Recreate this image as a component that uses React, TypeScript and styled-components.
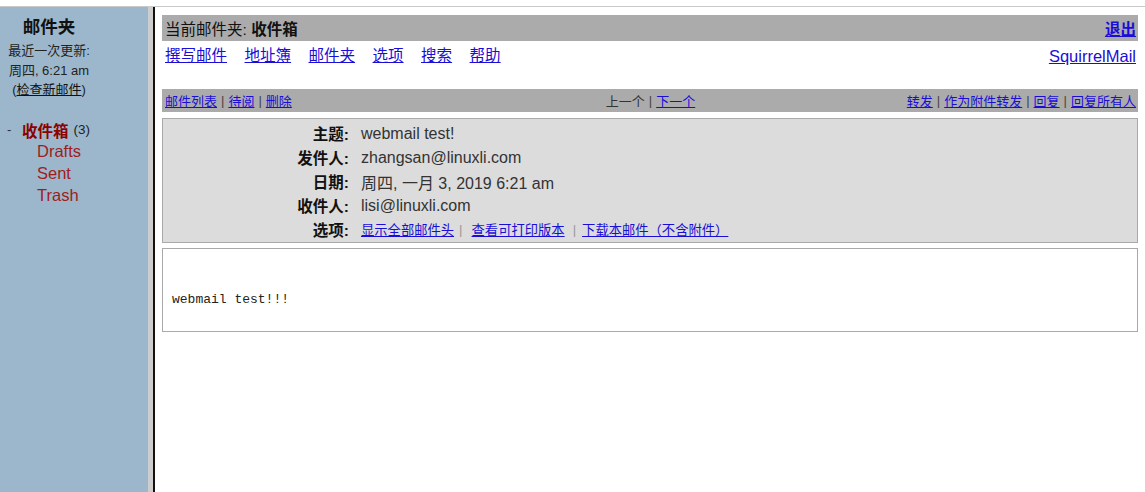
import { createGlobalStyle, styled } from "styled-components";

const GlobalStyle = createGlobalStyle`
  html, body {
    margin: 0;
    padding: 0;
    background: #fff;
  }
  body {
    font-family: "Liberation Sans", "Noto Sans CJK SC", sans-serif;
    color: #222;
  }
`

const Page = styled.div`
  display: flex;
  flex-direction: column;
  height: 100vh;
`

const TopStrip = styled.div`
  height: 6px;
  border-bottom: 1px solid #c9c9c9;
  background: #fff;
  flex: none;
`

const Frames = styled.div`
  flex: 1;
  display: flex;
  min-height: 0;
`

const LeftPane = styled.aside`
  width: 141px;
  flex: none;
  background: #9cb7cb;
  padding: 7px 0 0 7px;
`

const Splitter = styled.div`
  width: 5px;
  flex: none;
  background: #cdcdcd;
  border-right: 2px solid #111;
`

const FolderHead = styled.div`
  width: 84px;
  text-align: center;
  font-size: 13px;
  line-height: 19.5px;
  color: #222;
`

const FolderTitle = styled.div`
  font-size: 17.5px;
  font-weight: bold;
  line-height: 26px;
  color: #111;
  margin-bottom: 1px;
`

const RefreshLink = styled.a`
  color: #111;
  text-decoration: underline;
`

const FolderList = styled.ul`
  list-style: none;
  margin: 19px 0 0;
  padding: 0;
  font-size: 16.5px;
`

const FolderItem = styled.li<{ $indent?: boolean }>`
  display: flex;
  align-items: center;
  height: 22px;
  padding-left: ${p => (p.$indent ? "30px" : "0")};
`

const Collapse = styled.span`
  width: 15px;
  color: #333;
  font-size: 13px;
`

const FolderName = styled.a<{ $current?: boolean }>`
  color: ${p => (p.$current ? "#8c0000" : "#a01c1c")};
  font-weight: ${p => (p.$current ? "bold" : "normal")};
  font-size: ${p => (p.$current ? "15.5px" : "16.5px")};
  text-decoration: none;
`

const Unread = styled.span`
  font-size: 13.5px;
  color: #222;
  margin-left: 5px;
`

const Main = styled.main`
  flex: 1;
  padding: 8px 7px 0 7px;
  min-width: 0;
`

const TitleBar = styled.div`
  height: 26px;
  background: #ababab;
  display: flex;
  align-items: center;
  justify-content: space-between;
  padding: 0 2px 0 3px;
  font-size: 15.5px;
  color: #111;
`

const Strong = styled.b`
  font-weight: bold;
`

const Link = styled.a<{ $bold?: boolean }>`
  color: #1a0dd8;
  text-decoration: underline;
  font-weight: ${p => (p.$bold ? "bold" : "normal")};
  cursor: pointer;
`

const NavRow = styled.div`
  height: 43px;
  display: flex;
  justify-content: space-between;
  align-items: flex-start;
  padding: 5px 2px 0 3px;
  font-size: 15.5px;
  line-height: 20px;
`

const NavLinks = styled.div`
  display: flex;
  gap: 17.5px;
`

const BrandLink = styled(Link)`
  font-size: 16.5px;
`

const Toolbar = styled.div`
  height: 23px;
  background: #ababab;
  display: grid;
  grid-template-columns: 1fr auto 1fr;
  align-items: center;
  padding: 0 2px 0 3px;
  font-size: 13px;
`

const ToolGroup = styled.div<{ $align: "left" | "center" | "right" }>`
  display: flex;
  justify-content: ${p =>
    p.$align === "left" ? "flex-start" : p.$align === "right" ? "flex-end" : "center"};
  align-items: center;
  white-space: nowrap;
`

const Sep = styled.span`
  color: #444;
  margin: 0 4px;
`

const OptSep = styled.span<{ $before: number; $after: number }>`
  color: #999;
  margin: 0 ${p => p.$after}px 0 ${p => p.$before}px;
`

const Plain = styled.span`
  color: #333;
`

const HeaderBox = styled.div`
  margin-top: 6px;
  background: #dcdcdc;
  border: 1px solid #a9a9a9;
  padding: 2px 0 1px;
  display: grid;
  grid-template-columns: 186px 1fr;
  grid-auto-rows: 24px;
  column-gap: 12px;
  align-items: center;
`

const Label = styled.div`
  text-align: right;
  font-size: 15.5px;
  font-weight: bold;
  color: #111;
`

const Value = styled.div`
  font-size: 16px;
  color: #333;
  padding-top: 1px;
`

const OptionLinks = styled.div`
  font-size: 13.3px;
  display: flex;
  align-items: center;
`

const BodyBox = styled.div`
  margin-top: 5px;
  height: 82px;
  border: 1px solid #a9a9a9;
  padding: 0 9px;
  display: flex;
  align-items: flex-end;
`

const BodyText = styled.pre`
  margin: 0 0 23px;
  font-family: "Liberation Mono", "DejaVu Sans Mono", monospace;
  font-size: 13px;
  line-height: 16px;
  color: #222;
`

const headers = [
  { label: "主题:", value: "webmail test!" },
  { label: "发件人:", value: "zhangsan@linuxli.com" },
  { label: "日期:", value: "周四, 一月 3, 2019 6:21 am" },
  { label: "收件人:", value: "lisi@linuxli.com" },
]

const navItems = ["撰写邮件", "地址簿", "邮件夹", "选项", "搜索", "帮助"]

const App = () => {
  return (
    <Page>
      <GlobalStyle />
      <TopStrip />
      <Frames>
        <LeftPane>
          <FolderHead>
            <FolderTitle>邮件夹</FolderTitle>
            <div>最近一次更新:</div>
            <div>周四, 6:21 am</div>
            <div>(<RefreshLink>检查新邮件</RefreshLink>)</div>
          </FolderHead>
          <FolderList>
            <FolderItem>
              <Collapse>-</Collapse>
              <FolderName $current>收件箱</FolderName>
              <Unread>(3)</Unread>
            </FolderItem>
            <FolderItem $indent><FolderName>Drafts</FolderName></FolderItem>
            <FolderItem $indent><FolderName>Sent</FolderName></FolderItem>
            <FolderItem $indent><FolderName>Trash</FolderName></FolderItem>
          </FolderList>
        </LeftPane>
        <Splitter />
        <Main>
          <TitleBar>
            <span>当前邮件夹: <Strong>收件箱</Strong></span>
            <Link $bold>退出</Link>
          </TitleBar>
          <NavRow>
            <NavLinks>
              {navItems.map(item => <Link key={item}>{item}</Link>)}
            </NavLinks>
            <BrandLink>SquirrelMail</BrandLink>
          </NavRow>
          <Toolbar>
            <ToolGroup $align="left">
              <Link>邮件列表</Link><Sep>|</Sep>
              <Link>待阅</Link><Sep>|</Sep>
              <Link>删除</Link>
            </ToolGroup>
            <ToolGroup $align="center">
              <Plain>上一个</Plain><Sep>|</Sep>
              <Link>下一个</Link>
            </ToolGroup>
            <ToolGroup $align="right">
              <Link>转发</Link><Sep>|</Sep>
              <Link>作为附件转发</Link><Sep>|</Sep>
              <Link>回复</Link><Sep>|</Sep>
              <Link>回复所有人</Link>
            </ToolGroup>
          </Toolbar>
          <HeaderBox>
            {headers.map(h => [
              <Label key={h.label + "-l"}>{h.label}</Label>,
              <Value key={h.label + "-v"}>{h.value}</Value>,
            ])}
            <Label>选项:</Label>
            <OptionLinks>
              <Link>显示全部邮件头</Link>
              <OptSep $before={5} $after={9}>|</OptSep>
              <Link>查看可打印版本</Link>
              <OptSep $before={8} $after={6}>|</OptSep>
              <Link>下载本邮件（不含附件）</Link>
            </OptionLinks>
          </HeaderBox>
          <BodyBox>
            <BodyText>webmail test!!!</BodyText>
          </BodyBox>
        </Main>
      </Frames>
    </Page>
  )
}

export default App;
